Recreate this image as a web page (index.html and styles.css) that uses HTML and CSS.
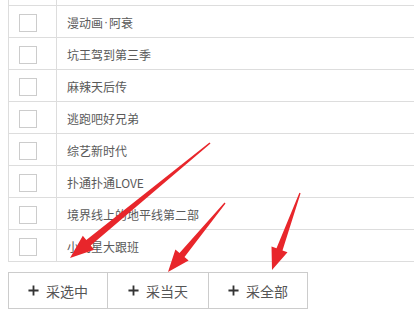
FILE: index.html
```html
<!DOCTYPE html>
<html lang="zh">
<head>
<meta charset="utf-8">
<link rel="stylesheet" href="styles.css">
</head>
<body>
<div class="page">
  <div class="table">
    <div class="row stub"><div class="c1"></div><div class="c2"></div></div>
    <div class="row"><div class="c1"><span class="box"></span></div><div class="c2">漫动画<span class="dot">·</span>阿衰</div></div>
    <div class="row"><div class="c1"><span class="box"></span></div><div class="c2">坑王驾到第三季</div></div>
    <div class="row"><div class="c1"><span class="box"></span></div><div class="c2">麻辣天后传</div></div>
    <div class="row"><div class="c1"><span class="box"></span></div><div class="c2">逃跑吧好兄弟</div></div>
    <div class="row"><div class="c1"><span class="box"></span></div><div class="c2">综艺新时代</div></div>
    <div class="row"><div class="c1"><span class="box"></span></div><div class="c2">扑通扑通LOVE</div></div>
    <div class="row"><div class="c1"><span class="box"></span></div><div class="c2">境界线上的地平线第二部</div></div>
    <div class="row"><div class="c1"><span class="box"></span></div><div class="c2">小明星大跟班</div></div>
  </div>
  <div class="btns">
    <button class="btn"><svg class="plus" viewBox="0 0 12 12"><path d="M6 0.5V11.5M0.5 6H11.5" stroke="#333" stroke-width="2"/></svg>采选中</button>
    <button class="btn"><svg class="plus" viewBox="0 0 12 12"><path d="M6 0.5V11.5M0.5 6H11.5" stroke="#333" stroke-width="2"/></svg>采当天</button>
    <button class="btn"><svg class="plus" viewBox="0 0 12 12"><path d="M6 0.5V11.5M0.5 6H11.5" stroke="#333" stroke-width="2"/></svg>采全部</button>
  </div>
  <svg class="arrows" viewBox="0 0 414 335" width="414" height="335">
    <polygon fill="#e8262b" points="210.5,143.6 90.7,245.5 94.2,249.8 70,258 82.8,235.8 86.3,240.1 209.5,142.4"/>
    <polygon fill="#e8262b" points="225.5,203.4 184.5,257 188.6,260.4 168,272 175.4,249.6 179.5,253 224.5,202.6"/>
    <polygon fill="#e8262b" points="300.6,193.2 282.5,250.4 287.5,252.2 272,270 271.5,246.4 276.5,248.2 299.4,192.8"/>
  </svg>
</div>
</body>
</html>
```

FILE: styles.css
```css
html, body {
  margin: 0;
  padding: 0;
  background: #fff;
}
.page {
  position: relative;
  width: 414px;
  height: 335px;
  overflow: hidden;
  padding-left: 8px;
  box-sizing: border-box;
  font-family: "Noto Sans CJK SC", "Microsoft YaHei", sans-serif;
}
.table {
  border-left: 1px solid #ddd;
}
.row {
  display: flex;
  height: 31px;
  border-bottom: 1px solid #ddd;
}
.row.stub {
  height: 5px;
}
.c1 {
  width: 48px;
  border-right: 1px solid #ddd;
  display: flex;
  align-items: center;
  padding-left: 10px;
  padding-top: 3px;
  box-sizing: border-box;
}
.box {
  width: 16px;
  height: 16px;
  border: 1px solid #ccc;
  background: #fff;
  display: block;
}
.c2 {
  flex: 1;
  display: flex;
  align-items: center;
  padding-left: 10px;
  padding-top: 1px;
  font-size: 12px;
  color: #5a5a5a;
  white-space: nowrap;
}
.dot {
  font-family: "Liberation Sans", sans-serif;
  padding: 0 1px;
}
.btns {
  display: flex;
  margin-top: 10px;
}
.btn {
  width: 100px;
  height: 37px;
  display: flex;
  align-items: center;
  justify-content: center;
  gap: 7px;
  padding: 0;
  margin: 0 -1px 0 0;
  border: 1px solid #ccc;
  background: #fff;
  font-family: "Noto Sans CJK SC", "Microsoft YaHei", sans-serif;
  font-size: 14px;
  color: #555;
}
.btn:nth-child(2) { width: 102px; }
.plus {
  width: 11px;
  height: 11px;
}
.arrows {
  position: absolute;
  left: 0;
  top: 0;
  pointer-events: none;
}
```
